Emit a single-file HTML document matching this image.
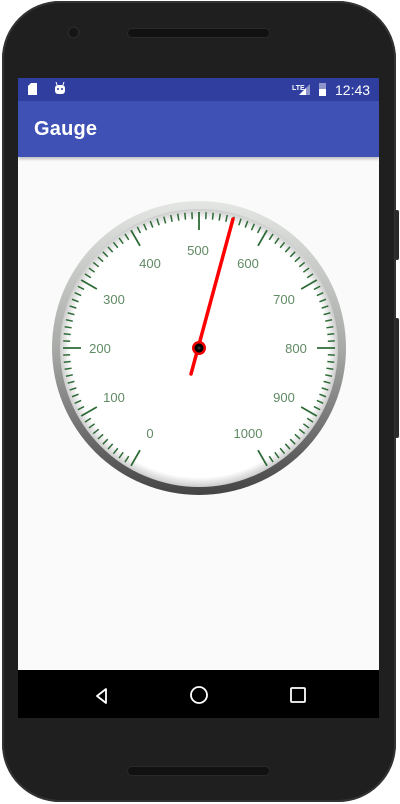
<!DOCTYPE html>
<html><head><meta charset="utf-8"><style>
html,body{margin:0;padding:0;background:#fff;width:400px;height:804px;overflow:hidden;font-family:"Liberation Sans",sans-serif}
.phone{position:absolute;left:2px;top:1px;width:394px;height:801px;background:#1f1f1f;border-radius:58px;box-shadow:inset 0 0 0 2px #333}
.btn{position:absolute;left:395px;width:4px;background:#2a2a2a;border-radius:2px}
.screen{position:absolute;left:18px;top:78px;width:361px;height:640px;background:#fafafa;overflow:hidden}
.status{position:absolute;left:0;top:0;width:361px;height:23px;background:#303f9f;color:#fff}
.appbar{position:absolute;left:0;top:23px;width:361px;height:56px;background:#3f51b5;box-shadow:0 2px 3px rgba(0,0,0,.25)}
.title{position:absolute;left:16px;top:17px;font-size:20px;color:#fff;font-weight:bold;letter-spacing:.2px}
.nav{position:absolute;left:0;top:592px;width:361px;height:48px;background:#000}
.speaker{position:absolute;left:127px;width:143px;height:10px;border-radius:6px;background:#111;box-shadow:inset 0 0 0 1px #2a2a2a}
</style></head><body>
<div class="phone"></div>
<div class="btn" style="top:210px;height:50px"></div>
<div class="btn" style="top:318px;height:120px"></div>
<div class="speaker" style="top:28px"></div>
<div class="speaker" style="top:766px"></div>
<div style="position:absolute;left:69px;top:28px;width:9px;height:9px;border-radius:50%;background:#151515;box-shadow:0 0 0 2px #262626"></div>
<div class="screen">
 <div class="status">
  <svg width="361" height="23" style="position:absolute;left:0;top:0">
   <path d="M13 5h6v12h-9v-9z" fill="#fff"/>
   <rect x="37" y="7" width="10" height="9" rx="3" fill="#fff"/>
   <line x1="38" y1="4" x2="39" y2="7" stroke="#fff"/><line x1="46" y1="4" x2="45" y2="7" stroke="#fff"/>
   <circle cx="40" cy="11" r="1" fill="#303f9f"/><circle cx="44" cy="11" r="1" fill="#303f9f"/>
   <text x="274" y="12" font-size="7" fill="#fff" font-weight="bold">LTE</text>
   <path d="M292 6v11h-11z" fill="#fff" opacity=".45"/><path d="M288 10v7h-7z" fill="#fff"/>
   <rect x="301" y="5" width="7" height="13" fill="#fff" opacity=".45"/><rect x="301" y="11" width="7" height="7" fill="#fff"/>
   <text x="317" y="17" font-size="14" fill="#fff">12:43</text>
  </svg>
 </div>
 <div class="appbar"><div class="title">Gauge</div></div>
 <div class="nav">
  <svg width="361" height="48">
   <path d="M88 19l-9 7 9 7z" fill="none" stroke="#fff" stroke-width="1.8" stroke-linejoin="round"/>
   <circle cx="181" cy="25" r="8" fill="none" stroke="#fff" stroke-width="1.8"/>
   <rect x="273" y="18" width="14" height="14" rx="1" fill="none" stroke="#fff" stroke-width="1.8"/>
  </svg>
 </div>
</div>
<svg width="400" height="804" style="position:absolute;left:0;top:0">
 <defs>
  <linearGradient id="ring" x1="0" y1="0" x2="0" y2="1">
   <stop offset="0" stop-color="#e4e6e4"/><stop offset=".5" stop-color="#a8aaa8"/><stop offset="1" stop-color="#444"/>
  </linearGradient>
  <radialGradient id="face" cx=".5" cy=".5" r=".5">
   <stop offset=".93" stop-color="#fff"/><stop offset="1" stop-color="#ccc"/>
  </radialGradient>
 </defs>
 <circle cx="199" cy="348" r="147" fill="url(#ring)"/>
 <circle cx="199" cy="348" r="139" fill="url(#face)"/>
 <g id="ticks" stroke="#2e6b36"></g>
 <g font-size="13" fill="#5f8a63" text-anchor="middle" font-family="Liberation Sans,sans-serif">
  <text x="150" y="438">0</text>
  <text x="114" y="402">100</text>
  <text x="100" y="353">200</text>
  <text x="114" y="304">300</text>
  <text x="150" y="268">400</text>
  <text x="198" y="255">500</text>
  <text x="248" y="268">600</text>
  <text x="284" y="304">700</text>
  <text x="296" y="353">800</text>
  <text x="284" y="402">900</text>
  <text x="248" y="438">1000</text>
 </g>
 <line x1="191" y1="374" x2="233" y2="219" stroke="#ff0000" stroke-width="3.5" stroke-linecap="round"/>
 <circle cx="199" cy="348" r="7" fill="#e00"/>
 <circle cx="199" cy="348" r="4.5" fill="#000"/>
 <circle cx="199" cy="348" r="1.5" fill="#333"/>
</svg>
<script>
var g=document.getElementById('ticks'),s='';
for(var v=0;v<=1000;v+=10){var a=(-150+v*0.3)*Math.PI/180,maj=v%100==0,r1=136,r2=maj?118:129;
var sx=Math.sin(a),cy=-Math.cos(a);
s+='<line x1="'+(199+sx*r1)+'" y1="'+(348+cy*r1)+'" x2="'+(199+sx*r2)+'" y2="'+(348+cy*r2)+'" stroke-width="'+(maj?1.8:1.5)+'"/>';}
g.innerHTML=s;
</script>
</body></html>
